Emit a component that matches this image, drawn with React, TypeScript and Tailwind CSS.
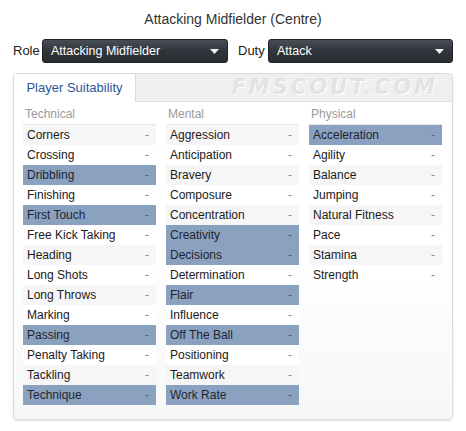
import { useState } from 'react';

type Attr = { name: string; key?: boolean };

const technical: Attr[] = [
  { name: 'Corners' },
  { name: 'Crossing' },
  { name: 'Dribbling', key: true },
  { name: 'Finishing' },
  { name: 'First Touch', key: true },
  { name: 'Free Kick Taking' },
  { name: 'Heading' },
  { name: 'Long Shots' },
  { name: 'Long Throws' },
  { name: 'Marking' },
  { name: 'Passing', key: true },
  { name: 'Penalty Taking' },
  { name: 'Tackling' },
  { name: 'Technique', key: true },
];

const mental: Attr[] = [
  { name: 'Aggression' },
  { name: 'Anticipation' },
  { name: 'Bravery' },
  { name: 'Composure' },
  { name: 'Concentration' },
  { name: 'Creativity', key: true },
  { name: 'Decisions', key: true },
  { name: 'Determination' },
  { name: 'Flair', key: true },
  { name: 'Influence' },
  { name: 'Off The Ball', key: true },
  { name: 'Positioning' },
  { name: 'Teamwork' },
  { name: 'Work Rate', key: true },
];

const physical: Attr[] = [
  { name: 'Acceleration', key: true },
  { name: 'Agility' },
  { name: 'Balance' },
  { name: 'Jumping' },
  { name: 'Natural Fitness' },
  { name: 'Pace' },
  { name: 'Stamina' },
  { name: 'Strength' },
];

function Select({ value, width }: { value: string; width: string }) {
  return (
    <div
      className={`${width} h-[24px] flex items-center justify-between rounded-[3px] border border-[#1e2226] bg-gradient-to-b from-[#4a4f57] via-[#30353c] to-[#2a2e35] pl-[8px] pr-[8px] text-white text-[12.5px]`}
    >
      <span>{value}</span>
      <svg width="9" height="5" viewBox="0 0 9 5">
        <path d="M0 0 L9 0 L4.5 5 Z" fill="#f2f2f2" />
      </svg>
    </div>
  );
}

function Column({ title, items }: { title: string; items: Attr[] }) {
  return (
    <div className="w-[133px]">
      <div className="h-[19px] pl-[2px] flex items-end pb-[1px] text-[12px] text-[#9a9a9a] border-b border-[#e6e6e6]">
        {title}
      </div>
      {items.map((a, i) => (
        <div
          key={a.name}
          className={`h-[20px] flex items-center justify-between pl-[4px] pr-[7px] text-[12px] ${
            a.key
              ? 'bg-[#8aa1bf] text-[#1f2530]'
              : i % 2 === 0
              ? 'bg-[#f6f6f6] text-[#1a1a1a]'
              : 'bg-white text-[#1a1a1a]'
          }`}
        >
          <span>{a.name}</span>
          <span className={a.key ? 'text-[#55647a]' : 'text-[#8a8a8a]'}>-</span>
        </div>
      ))}
    </div>
  );
}

export default function App() {
  const [tab] = useState('suitability');

  return (
    <div
      className="w-[466px] h-[431px] bg-white relative"
      style={{ fontFamily: '"Liberation Sans", Arial, sans-serif' }}
    >
      <div className="pt-[9px] text-center text-[14px] text-[#333]">Attacking Midfielder (Centre)</div>

      <div className="mt-[9px] flex items-center pl-[13px]">
        <span className="text-[13px] text-[#222] w-[29px]">Role</span>
        <Select value="Attacking Midfielder" width="w-[186px]" />
        <span className="ml-[10px] text-[13px] text-[#222] w-[30px]">Duty</span>
        <Select value="Attack" width="w-[185px]" />
      </div>

      <div className="mt-[10px] mx-[13px] w-[440px] h-[347px] rounded-[4px] border border-[#dcdcdc] shadow-[0_1px_2px_rgba(0,0,0,0.12)] overflow-hidden flex flex-col bg-gradient-to-b from-white via-white to-[#f6f7f7]">
        <div className="h-[28px] flex bg-[#efefef] border-b border-[#dedede] relative">
          <div
            className={`w-[122px] -mb-px h-[28px] bg-white border-r border-[#dcdcdc] flex items-center justify-center text-[13px] text-[#2b5797] ${
              tab === 'suitability' ? '' : ''
            }`}
          >
            Player Suitability
          </div>
          <div className="flex-1 flex items-center justify-end pr-[14px]">
            <span
              className="italic font-black text-[21px] tracking-[3px] text-[#e3e3e3]"
              style={{ fontFamily: '"DejaVu Sans", sans-serif', textShadow: '1px 1px 0 #ffffff' }}
            >
              FMSCOUT.COM
            </span>
          </div>
        </div>
        <div className="flex gap-[10px] pl-[9px] pt-[4px]">
          <Column title="Technical" items={technical} />
          <Column title="Mental" items={mental} />
          <Column title="Physical" items={physical} />
        </div>
      </div>
    </div>
  );
}
